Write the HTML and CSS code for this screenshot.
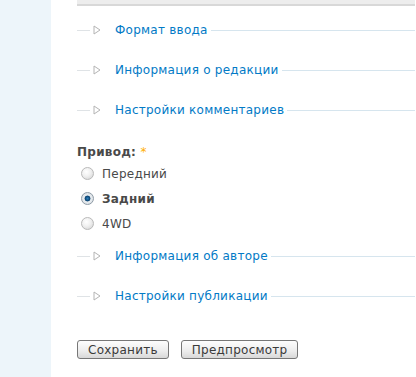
FILE: index.html
```html
<!DOCTYPE html>
<html lang="ru">
<head>
    <meta charset="UTF-8">
    <title>Форма</title>
    <link rel="stylesheet" href="styles.css">
</head>
<body>
    <div id="sidebar"></div>
    <div id="content">
        <div class="top-box"></div>

        <div class="collapsed">
            <span class="dash"></span>
            <svg class="arrow" width="8" height="10" viewBox="0 0 8 10"><polygon points="1,1 7,5 1,9" fill="none" stroke="#b4b4b4" stroke-width="1"/></svg>
            <a href="#">Формат ввода</a>
            <span class="rule"></span>
        </div>
        <div class="collapsed">
            <span class="dash"></span>
            <svg class="arrow" width="8" height="10" viewBox="0 0 8 10"><polygon points="1,1 7,5 1,9" fill="none" stroke="#b4b4b4" stroke-width="1"/></svg>
            <a href="#">Информация о редакции</a>
            <span class="rule"></span>
        </div>
        <div class="collapsed">
            <span class="dash"></span>
            <svg class="arrow" width="8" height="10" viewBox="0 0 8 10"><polygon points="1,1 7,5 1,9" fill="none" stroke="#b4b4b4" stroke-width="1"/></svg>
            <a href="#">Настройки комментариев</a>
            <span class="rule"></span>
        </div>

        <div class="form-item">
            <label class="field-label">Привод: <span class="required">*</span></label>
            <label class="option"><input type="radio" name="drive"> Передний</label>
            <label class="option checked"><input type="radio" name="drive" checked> Задний</label>
            <label class="option"><input type="radio" name="drive"> 4WD</label>
        </div>

        <div class="collapsed">
            <span class="dash"></span>
            <svg class="arrow" width="8" height="10" viewBox="0 0 8 10"><polygon points="1,1 7,5 1,9" fill="none" stroke="#b4b4b4" stroke-width="1"/></svg>
            <a href="#">Информация об авторе</a>
            <span class="rule"></span>
        </div>
        <div class="collapsed">
            <span class="dash"></span>
            <svg class="arrow" width="8" height="10" viewBox="0 0 8 10"><polygon points="1,1 7,5 1,9" fill="none" stroke="#b4b4b4" stroke-width="1"/></svg>
            <a href="#">Настройки публикации</a>
            <span class="rule"></span>
        </div>

        <div class="buttons">
            <button type="button">Сохранить</button>
            <button type="button">Предпросмотр</button>
        </div>
    </div>
</body>
</html>
```

FILE: styles.css
```css
html, body {
    height: 100%;
}
body {
    margin: 0;
    display: flex;
    font-family: 'DejaVu Sans', Verdana, sans-serif;
    font-size: 12px;
    letter-spacing: 0.25px;
    color: #494949;
    background-color: #ffffff;
}
#sidebar {
    width: 51px;
    flex-shrink: 0;
    background-color: #edf5fa;
}
#content {
    flex: 1;
    padding-left: 26px;
    padding-right: 1px;
}
.top-box {
    height: 4px;
    background-color: #ededed;
    border-bottom: 2px solid #d8d8d8;
    margin-bottom: 4px;
}
.collapsed {
    height: 40px;
    display: flex;
    align-items: center;
}
.collapsed .dash {
    width: 13px;
    height: 1px;
    background-color: #dfe3e6;
}
.collapsed .arrow {
    margin-left: 3px;
    margin-right: 14px;
}
.collapsed a {
    color: #027ac6;
    text-decoration: none;
    line-height: 16px;
}
.collapsed .rule {
    flex: 1;
    height: 1px;
    margin-left: 3px;
    background-color: #d6e5ee;
}
.form-item {
    margin-top: 14px;
}
.field-label {
    display: block;
    font-weight: bold;
    line-height: 16px;
    margin-bottom: 1px;
}
.required {
    color: #ffae00;
    font-weight: normal;
}
.option {
    display: flex;
    align-items: center;
    height: 25px;
    padding-left: 4px;
}
.option.checked {
    font-weight: bold;
}
.option input {
    appearance: none;
    width: 13px;
    height: 13px;
    margin: 0 8px 0 0;
    border-radius: 50%;
    border: 1px solid #b9b9b9;
    background: radial-gradient(circle at 40% 35%, #ffffff 0%, #f0f0f0 45%, #cfcfcf 100%);
    box-sizing: border-box;
}
.option input:checked {
    border-color: #8e9ba6;
    background: radial-gradient(circle at 50% 50%, #2f7fb8 0%, #0d4b7d 28%, #15466d 34%, #e9eef2 42%, #d2d6da 100%);
}
.buttons {
    margin-top: 24px;
    display: flex;
    gap: 12px;
}
.buttons button {
    font-family: 'DejaVu Sans', Verdana, sans-serif;
    font-size: 12px;
    letter-spacing: 0.25px;
    color: #3a3a3a;
    height: 19px;
    padding: 0 10px;
    border: 1px solid #777777;
    border-radius: 3px;
    background: linear-gradient(#fdfdfd, #ececec 60%, #d8d8d8);
    cursor: pointer;
}
```
